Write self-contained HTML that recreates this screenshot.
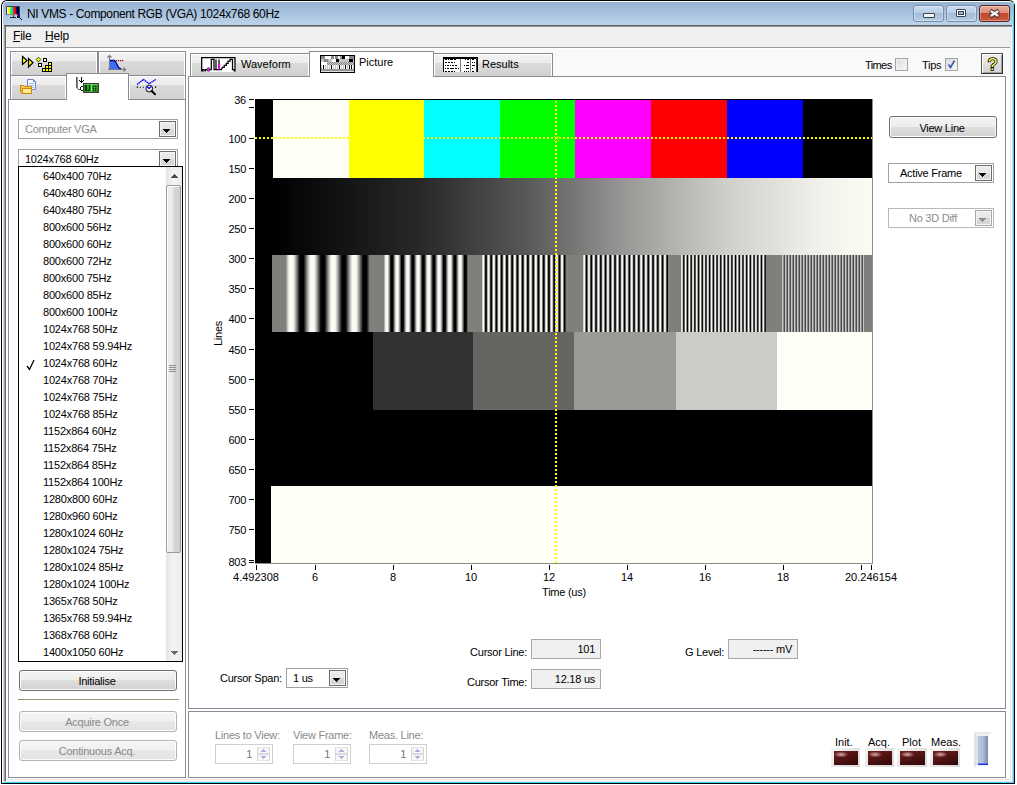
<!DOCTYPE html><html><head><meta charset="utf-8"><style>
html,body{margin:0;padding:0;width:1017px;height:785px;overflow:hidden;background:#fff}
body>div,body>svg{position:absolute;box-sizing:content-box}
.t{font-family:"Liberation Sans",sans-serif;color:#000;white-space:nowrap;letter-spacing:-0.25px}
u{text-decoration:underline;text-underline-offset:1px}
</style></head><body>
<div style="left:1px;top:0;width:1014px;height:784px;background:#000;border-radius:6px 6px 0 0"></div>
<div style="left:2px;top:1px;width:1012px;height:782px;background:#fff;border-radius:5px 5px 0 0"></div>
<div style="left:3px;top:2px;width:1010px;height:780px;background:linear-gradient(#95b1cf 0px,#bcd4ec 23px,#c4d9ee 24px);border-radius:4px 4px 0 0"></div>
<div style="left:1013px;top:2px;width:1px;height:781px;background:#44d4f2"></div>
<div style="left:3px;top:782px;width:1011px;height:1px;background:#44d4f2"></div>
<div style="left:1012px;top:24px;width:1px;height:758px;background:#c8d2f0"></div>
<div style="left:3px;top:781px;width:1010px;height:1px;background:#dfe3f6"></div>
<div style="left:4px;top:25px;width:1008px;height:1px;background:#5e5e5e"></div>
<div style="left:4px;top:26px;width:1008px;height:1px;background:#9a9a9a"></div>
<div style="left:4px;top:26px;width:1px;height:755px;background:#a0a0a0"></div>
<div style="left:5px;top:26px;width:1px;height:755px;background:#6a6a6a"></div>
<div style="left:6px;top:27px;width:1006px;height:754px;background:#fff"></div>
<div style="left:186px;top:49px;width:824px;height:27px;background:#f9f9f9"></div>
<div style="left:1011px;top:27px;width:1px;height:754px;background:#fff"></div>
<div style="left:1010px;top:27px;width:1px;height:752px;background:#e5e5e5"></div>
<div style="left:6px;top:780px;width:1006px;height:1px;background:#fff"></div>
<div style="left:6px;top:779px;width:1005px;height:1px;background:#e5e5e5"></div>
<div style="left:6px;top:27px;width:1004px;height:20px;background:#f0f0f0"></div>
<div style="left:6px;top:47px;width:1004px;height:1px;background:#9c9c9c"></div>
<div style="left:6px;top:48px;width:1004px;height:1px;background:#fff"></div>
<svg style="left:6px;top:6px" width="17" height="14" viewBox="6 6 17 14" shape-rendering="crispEdges">
<rect x="6" y="6" width="14" height="9" fill="#454545"/>
<rect x="7" y="7" width="1" height="7" fill="#fff"/><rect x="8" y="7" width="2" height="7" fill="#ff0"/>
<rect x="10" y="7" width="1" height="7" fill="#0ff"/><rect x="11" y="7" width="2" height="7" fill="#0f0"/>
<rect x="13" y="7" width="1" height="7" fill="#f0f"/><rect x="14" y="7" width="2" height="7" fill="#f00"/>
<rect x="16" y="7" width="1" height="7" fill="#00f"/><rect x="17" y="7" width="2" height="7" fill="#000"/>
<rect x="7" y="14" width="12" height="1" fill="#8a8a8a"/>
<rect x="13" y="15" width="1" height="2" fill="#333"/><rect x="10" y="17" width="6" height="1" fill="#222"/>
<rect x="17" y="14" width="3" height="4" fill="#1a1a1a"/><rect x="17" y="14" width="1" height="2" fill="#f00"/><rect x="18" y="14" width="1" height="3" fill="#00f"/>
<rect x="20" y="18" width="1" height="1" fill="#111"/><rect x="21" y="19" width="1" height="1" fill="#111"/>
</svg>
<div class="t" style="left:27px;top:8px;font-size:12px;line-height:12px;letter-spacing:-0.36px">NI VMS - Component RGB (VGA) 1024x768 60Hz</div>
<div style="left:913px;top:5px;width:29px;height:15px;border:1px solid #7a8ea8;border-radius:3px;background:linear-gradient(#c9dcf0 0%,#b8cfe8 45%,#a3bcd9 50%,#b5cde6 100%);box-shadow:inset 0 0 0 1px rgba(255,255,255,0.35)"></div>
<div style="left:946px;top:5px;width:29px;height:15px;border:1px solid #7a8ea8;border-radius:3px;background:linear-gradient(#c9dcf0 0%,#b8cfe8 45%,#a3bcd9 50%,#b5cde6 100%);box-shadow:inset 0 0 0 1px rgba(255,255,255,0.35)"></div>
<div style="left:979px;top:5px;width:29px;height:15px;border:1px solid #5a1f1f;border-radius:3px;background:linear-gradient(#e8a898 0%,#dd8e7c 45%,#c4482c 50%,#c85b40 100%);box-shadow:inset 0 0 0 1px rgba(255,255,255,0.35)"></div>
<div style="left:923px;top:13px;width:10px;height:3px;background:#f4f4f4;border:1px solid #39424e;border-radius:1px"></div>
<div style="left:956px;top:9px;width:8px;height:6px;border:1px solid #39424e;background:#fff;border-radius:1px"></div>
<div style="left:958px;top:11px;width:4px;height:2px;border:1px solid #39424e;background:#9fb6d0"></div>
<svg style="left:986px;top:7px" width="16" height="12" viewBox="986 7 16 12"><path d="M990.3 10.6 L998.7 16.4 M998.7 10.6 L990.3 16.4" stroke="#3a2a2a" stroke-width="4.2" stroke-linecap="butt"/><path d="M990.8 10.9 L998.2 16.1 M998.2 10.9 L990.8 16.1" stroke="#f4f4f4" stroke-width="2.4" stroke-linecap="butt"/></svg>
<div class="t" style="left:13px;top:30px;font-size:12px;line-height:12px;letter-spacing:-0.2px"><u>F</u>ile</div>
<div class="t" style="left:45px;top:30px;font-size:12px;line-height:12px;letter-spacing:-0.2px"><u>H</u>elp</div>
<div style="left:8px;top:99px;width:176px;height:677px;border:1px solid #898c95;background:#fff"></div>
<div style="left:10px;top:51px;width:86px;height:23px;border:1px solid #898c95;border-bottom:none;background:linear-gradient(#f3f3f3 0%,#ececec 40%,#dcdcdc 40%,#d0d0d0 100%);box-shadow:inset 1px 1px 0 #fff,inset -1px 0 0 #fff"></div>
<div style="left:98px;top:51px;width:86px;height:23px;border:1px solid #898c95;border-bottom:none;background:linear-gradient(#f3f3f3 0%,#ececec 40%,#dcdcdc 40%,#d0d0d0 100%);box-shadow:inset 1px 1px 0 #fff,inset -1px 0 0 #fff"></div>
<div style="left:10px;top:75px;width:55px;height:23px;border:1px solid #898c95;border-bottom:none;background:linear-gradient(#f3f3f3 0%,#ececec 40%,#dcdcdc 40%,#d0d0d0 100%);box-shadow:inset 1px 1px 0 #fff,inset -1px 0 0 #fff"></div>
<div style="left:128px;top:75px;width:56px;height:23px;border:1px solid #898c95;border-bottom:none;background:linear-gradient(#f3f3f3 0%,#ececec 40%,#dcdcdc 40%,#d0d0d0 100%);box-shadow:inset 1px 1px 0 #fff,inset -1px 0 0 #fff"></div>
<div style="left:66px;top:73px;width:61px;height:26px;border:1px solid #898c95;border-bottom:none;background:#fff"></div>
<div style="left:188px;top:76px;width:816px;height:631px;border:1px solid #898c95;background:#fff"></div>
<div style="left:188px;top:711px;width:816px;height:65px;border:1px solid #898c95;background:#fff"></div>
<div style="left:190px;top:53px;width:118px;height:22px;border:1px solid #898c95;border-bottom:none;background:linear-gradient(#f3f3f3 0%,#ececec 40%,#dcdcdc 40%,#d0d0d0 100%);box-shadow:inset 1px 1px 0 #fff,inset -1px 0 0 #fff"></div>
<div style="left:433px;top:53px;width:118px;height:22px;border:1px solid #898c95;border-bottom:none;background:linear-gradient(#f3f3f3 0%,#ececec 40%,#dcdcdc 40%,#d0d0d0 100%);box-shadow:inset 1px 1px 0 #fff,inset -1px 0 0 #fff"></div>
<div style="left:309px;top:51px;width:123px;height:25px;border:1px solid #898c95;border-bottom:none;background:#fff"></div>
<div class="t" style="left:241px;top:59px;font-size:11px;line-height:11px;letter-spacing:0">Waveform</div>
<div class="t" style="left:359px;top:57px;font-size:11px;line-height:11px;letter-spacing:0">Picture</div>
<div class="t" style="left:482px;top:59px;font-size:11px;line-height:11px;letter-spacing:0">Results</div>
<div style="left:255px;top:99px;width:617px;height:464px;background:#000"></div>
<div style="left:273px;top:100px;width:76px;height:78px;background:#fdfef5"></div>
<div style="left:349px;top:100px;width:75px;height:78px;background:#ffff00"></div>
<div style="left:424px;top:100px;width:76px;height:78px;background:#00ffff"></div>
<div style="left:500px;top:100px;width:75px;height:78px;background:#00ff00"></div>
<div style="left:575px;top:100px;width:76px;height:78px;background:#ff00ff"></div>
<div style="left:651px;top:100px;width:76px;height:78px;background:#ff0000"></div>
<div style="left:727px;top:100px;width:76px;height:78px;background:#0000ff"></div>
<div style="left:273px;top:178px;width:599px;height:77px;background:linear-gradient(90deg,rgb(0,0,0) 0%,rgb(41,41,41) 25%,rgb(87,87,86) 42%,rgb(117,118,115) 50%,rgb(153,154,151) 59%,rgb(207,208,203) 76%,rgb(242,243,236) 92%,rgb(251,253,243) 100%)"></div>
<div style="left:272px;top:255px;width:600px;height:77px;background:#7f807b"></div>
<div style="left:286px;top:255px;width:84px;height:77px;background:repeating-linear-gradient(90deg,rgb(139,140,139) 0.000px,rgb(173,174,173) 0.875px,rgb(204,205,198) 1.750px,rgb(230,231,224) 2.625px,rgb(250,251,244) 3.500px,rgb(250,251,244) 4.375px,rgb(250,251,244) 5.250px,rgb(250,251,244) 6.125px,rgb(250,251,244) 7.000px,rgb(230,231,224) 7.875px,rgb(204,205,198) 8.750px,rgb(173,174,173) 9.625px,rgb(139,140,139) 10.500px,rgb(103,104,103) 11.375px,rgb(67,68,67) 12.250px,rgb(33,34,33) 13.125px,rgb(1,2,1) 14.000px,rgb(0,1,0) 14.875px,rgb(0,1,0) 15.750px,rgb(0,1,0) 16.625px,rgb(1,2,1) 17.500px,rgb(33,34,33) 18.375px,rgb(67,68,67) 19.250px,rgb(103,104,103) 20.125px,rgb(139,140,139) 21.000px)"></div>
<div style="left:384px;top:255px;width:84px;height:77px;background:repeating-linear-gradient(90deg,rgb(139,140,139) 0.000px,rgb(173,174,173) 0.438px,rgb(204,205,198) 0.875px,rgb(230,231,224) 1.312px,rgb(250,251,244) 1.750px,rgb(250,251,244) 2.188px,rgb(250,251,244) 2.625px,rgb(250,251,244) 3.062px,rgb(250,251,244) 3.500px,rgb(230,231,224) 3.938px,rgb(204,205,198) 4.375px,rgb(173,174,173) 4.812px,rgb(139,140,139) 5.250px,rgb(103,104,103) 5.688px,rgb(67,68,67) 6.125px,rgb(33,34,33) 6.562px,rgb(1,2,1) 7.000px,rgb(0,1,0) 7.438px,rgb(0,1,0) 7.875px,rgb(0,1,0) 8.312px,rgb(1,2,1) 8.750px,rgb(33,34,33) 9.188px,rgb(67,68,67) 9.625px,rgb(103,104,103) 10.062px,rgb(139,140,139) 10.500px)"></div>
<div style="left:482px;top:255px;width:84px;height:77px;background:repeating-linear-gradient(90deg,rgb(139,140,139) 0.000px,rgb(172,173,172) 0.219px,rgb(201,202,195) 0.438px,rgb(226,227,220) 0.656px,rgb(245,246,239) 0.875px,rgb(250,251,244) 1.094px,rgb(250,251,244) 1.312px,rgb(250,251,244) 1.531px,rgb(245,246,239) 1.750px,rgb(226,227,220) 1.969px,rgb(201,202,195) 2.188px,rgb(172,173,172) 2.406px,rgb(139,140,139) 2.625px,rgb(104,105,104) 2.844px,rgb(70,71,70) 3.062px,rgb(39,40,39) 3.281px,rgb(10,11,10) 3.500px,rgb(0,1,0) 3.719px,rgb(0,1,0) 3.938px,rgb(0,1,0) 4.156px,rgb(10,11,10) 4.375px,rgb(39,40,39) 4.594px,rgb(70,71,70) 4.812px,rgb(104,105,104) 5.031px,rgb(139,140,139) 5.250px)"></div>
<div style="left:583px;top:255px;width:85px;height:77px;background:repeating-linear-gradient(90deg,rgb(139,140,139) 0.000px,rgb(170,171,170) 0.198px,rgb(199,200,199) 0.396px,rgb(222,223,216) 0.594px,rgb(240,241,234) 0.792px,rgb(250,251,244) 0.990px,rgb(250,251,244) 1.188px,rgb(250,251,244) 1.385px,rgb(240,241,234) 1.583px,rgb(222,223,216) 1.781px,rgb(199,200,199) 1.979px,rgb(170,171,170) 2.177px,rgb(139,140,139) 2.375px,rgb(106,107,106) 2.573px,rgb(74,75,74) 2.771px,rgb(44,45,44) 2.969px,rgb(18,19,18) 3.167px,rgb(0,1,0) 3.365px,rgb(0,1,0) 3.562px,rgb(0,1,0) 3.760px,rgb(18,19,18) 3.958px,rgb(44,45,44) 4.156px,rgb(74,75,74) 4.354px,rgb(106,107,106) 4.552px,rgb(139,140,139) 4.750px)"></div>
<div style="left:681px;top:255px;width:85px;height:77px;background:repeating-linear-gradient(90deg,rgb(139,140,139) 0.000px,rgb(169,170,169) 0.154px,rgb(196,197,196) 0.308px,rgb(219,220,213) 0.463px,rgb(236,237,230) 0.617px,rgb(246,247,240) 0.771px,rgb(250,251,244) 0.925px,rgb(246,247,240) 1.079px,rgb(236,237,230) 1.233px,rgb(219,220,213) 1.388px,rgb(196,197,196) 1.542px,rgb(169,170,169) 1.696px,rgb(139,140,139) 1.850px,rgb(108,109,108) 2.004px,rgb(77,78,77) 2.158px,rgb(49,50,49) 2.312px,rgb(25,26,25) 2.467px,rgb(8,9,8) 2.621px,rgb(0,1,0) 2.775px,rgb(8,9,8) 2.929px,rgb(25,26,25) 3.083px,rgb(49,50,49) 3.238px,rgb(77,78,77) 3.392px,rgb(108,109,108) 3.546px,rgb(139,140,139) 3.700px)"></div>
<div style="left:782px;top:255px;width:82px;height:77px;background:repeating-linear-gradient(90deg,rgb(139,140,139) 0.000px,rgb(157,158,157) 0.125px,rgb(173,174,173) 0.250px,rgb(187,188,187) 0.375px,rgb(198,199,198) 0.500px,rgb(205,206,199) 0.625px,rgb(207,208,201) 0.750px,rgb(205,206,199) 0.875px,rgb(198,199,198) 1.000px,rgb(187,188,187) 1.125px,rgb(173,174,173) 1.250px,rgb(157,158,157) 1.375px,rgb(139,140,139) 1.500px,rgb(120,121,120) 1.625px,rgb(102,103,102) 1.750px,rgb(87,88,87) 1.875px,rgb(74,75,74) 2.000px,rgb(66,67,66) 2.125px,rgb(64,65,64) 2.250px,rgb(66,67,66) 2.375px,rgb(74,75,74) 2.500px,rgb(87,88,87) 2.625px,rgb(102,103,102) 2.750px,rgb(120,121,120) 2.875px,rgb(139,140,139) 3.000px)"></div>
<div style="left:373px;top:332px;width:100px;height:78px;background:#323232"></div>
<div style="left:473px;top:332px;width:101px;height:78px;background:#656661"></div>
<div style="left:574px;top:332px;width:102px;height:78px;background:#9a9a96"></div>
<div style="left:676px;top:332px;width:101px;height:78px;background:#cbccc7"></div>
<div style="left:777px;top:332px;width:95px;height:78px;background:#fdfef5"></div>
<div style="left:271px;top:486px;width:601px;height:77px;background:#fdfef5"></div>
<div style="left:872px;top:99px;width:1px;height:465px;background:#8c8c8c"></div>
<div style="left:255px;top:563px;width:618px;height:1px;background:#8c8c8c"></div>
<div style="left:255px;top:137px;width:617px;height:2px;background:repeating-linear-gradient(90deg,#ffff00 0,#ffff00 2px,transparent 2px,transparent 4px)"></div>
<div style="left:555px;top:99px;width:2px;height:464px;background:repeating-linear-gradient(180deg,transparent 0,transparent 2px,#ffff00 2px,#ffff00 4px)"></div>
<svg style="left:553px;top:135px" width="7" height="7" viewBox="0 0 7 7" shape-rendering="crispEdges"><path d="M1 1h1v1H1zM2 2h1v1H2zM3 3h1v1H3zM4 4h1v1H4zM5 5h1v1H5zM5 1h1v1H5zM4 2h1v1H4zM2 4h1v1H2zM1 5h1v1H1z" fill="#ffff00"/></svg>
<div style="left:249px;top:99px;width:5px;height:1px;background:#000"></div>
<div style="left:249px;top:107px;width:5px;height:1px;background:#000"></div>
<div style="left:249px;top:138px;width:5px;height:1px;background:#000"></div>
<div style="left:249px;top:168px;width:5px;height:1px;background:#000"></div>
<div style="left:249px;top:198px;width:5px;height:1px;background:#000"></div>
<div style="left:249px;top:228px;width:5px;height:1px;background:#000"></div>
<div style="left:249px;top:258px;width:5px;height:1px;background:#000"></div>
<div style="left:249px;top:288px;width:5px;height:1px;background:#000"></div>
<div style="left:249px;top:318px;width:5px;height:1px;background:#000"></div>
<div style="left:249px;top:349px;width:5px;height:1px;background:#000"></div>
<div style="left:249px;top:379px;width:5px;height:1px;background:#000"></div>
<div style="left:249px;top:409px;width:5px;height:1px;background:#000"></div>
<div style="left:249px;top:439px;width:5px;height:1px;background:#000"></div>
<div style="left:249px;top:469px;width:5px;height:1px;background:#000"></div>
<div style="left:249px;top:499px;width:5px;height:1px;background:#000"></div>
<div style="left:249px;top:529px;width:5px;height:1px;background:#000"></div>
<div style="left:249px;top:560px;width:5px;height:1px;background:#000"></div>
<div style="left:249px;top:562px;width:5px;height:1px;background:#000"></div>
<div class="t" style="right:771px;top:95px;font-size:11px;line-height:11px;text-align:right;">36</div>
<div class="t" style="right:771px;top:134px;font-size:11px;line-height:11px;text-align:right;">100</div>
<div class="t" style="right:771px;top:164px;font-size:11px;line-height:11px;text-align:right;">150</div>
<div class="t" style="right:771px;top:194px;font-size:11px;line-height:11px;text-align:right;">200</div>
<div class="t" style="right:771px;top:224px;font-size:11px;line-height:11px;text-align:right;">250</div>
<div class="t" style="right:771px;top:254px;font-size:11px;line-height:11px;text-align:right;">300</div>
<div class="t" style="right:771px;top:284px;font-size:11px;line-height:11px;text-align:right;">350</div>
<div class="t" style="right:771px;top:314px;font-size:11px;line-height:11px;text-align:right;">400</div>
<div class="t" style="right:771px;top:345px;font-size:11px;line-height:11px;text-align:right;">450</div>
<div class="t" style="right:771px;top:375px;font-size:11px;line-height:11px;text-align:right;">500</div>
<div class="t" style="right:771px;top:405px;font-size:11px;line-height:11px;text-align:right;">550</div>
<div class="t" style="right:771px;top:435px;font-size:11px;line-height:11px;text-align:right;">600</div>
<div class="t" style="right:771px;top:465px;font-size:11px;line-height:11px;text-align:right;">650</div>
<div class="t" style="right:771px;top:495px;font-size:11px;line-height:11px;text-align:right;">700</div>
<div class="t" style="right:771px;top:525px;font-size:11px;line-height:11px;text-align:right;">750</div>
<div class="t" style="right:771px;top:557px;font-size:11px;line-height:11px;text-align:right;">803</div>
<div style="left:256px;top:565px;width:1px;height:5px;background:#000"></div>
<div style="left:315px;top:565px;width:1px;height:5px;background:#000"></div>
<div style="left:393px;top:565px;width:1px;height:5px;background:#000"></div>
<div style="left:471px;top:565px;width:1px;height:5px;background:#000"></div>
<div style="left:549px;top:565px;width:1px;height:5px;background:#000"></div>
<div style="left:627px;top:565px;width:1px;height:5px;background:#000"></div>
<div style="left:705px;top:565px;width:1px;height:5px;background:#000"></div>
<div style="left:783px;top:565px;width:1px;height:5px;background:#000"></div>
<div style="left:861px;top:565px;width:1px;height:5px;background:#000"></div>
<div style="left:871px;top:565px;width:1px;height:5px;background:#000"></div>
<div class="t" style="left:216px;width:80px;top:572px;font-size:11px;line-height:11px;text-align:center;letter-spacing:0">4.492308</div>
<div class="t" style="left:275px;width:80px;top:572px;font-size:11px;line-height:11px;text-align:center;letter-spacing:0">6</div>
<div class="t" style="left:353px;width:80px;top:572px;font-size:11px;line-height:11px;text-align:center;letter-spacing:0">8</div>
<div class="t" style="left:431px;width:80px;top:572px;font-size:11px;line-height:11px;text-align:center;letter-spacing:0">10</div>
<div class="t" style="left:509px;width:80px;top:572px;font-size:11px;line-height:11px;text-align:center;letter-spacing:0">12</div>
<div class="t" style="left:587px;width:80px;top:572px;font-size:11px;line-height:11px;text-align:center;letter-spacing:0">14</div>
<div class="t" style="left:665px;width:80px;top:572px;font-size:11px;line-height:11px;text-align:center;letter-spacing:0">16</div>
<div class="t" style="left:743px;width:80px;top:572px;font-size:11px;line-height:11px;text-align:center;letter-spacing:0">18</div>
<div class="t" style="left:831px;width:80px;top:572px;font-size:11px;line-height:11px;text-align:center;letter-spacing:0">20.246154</div>
<div class="t" style="left:524px;width:80px;top:587px;font-size:11px;line-height:11px;text-align:center;">Time (us)</div>
<div class="t" style="left:198px;top:328px;width:40px;height:11px;font-size:11px;line-height:11px;text-align:center;transform:rotate(-90deg)">Lines</div>
<div style="left:18px;top:119px;width:158px;height:18px;border:1px solid #a0a0a8;background:#fff"></div>
<div style="left:159px;top:121px;width:15px;height:14px;border:1px solid #6d6d6d;background:linear-gradient(#fbfbfb 0,#fbfbfb 1px,#ececec 1px,#e6e6e6 50%,#d8d8d8 50%,#d4d4d4 100%);box-shadow:inset 0 0 0 1px #f4f4f4"></div>
<svg style="left:163px;top:129px" width="8" height="4" viewBox="0 0 8 4" shape-rendering="crispEdges"><path d="M0 0h7v1h-1v1h-1v1h-1v1h-1v-1h-1v-1h-1v-1h-1z" fill="#000"/></svg>
<div class="t" style="left:25px;top:124px;font-size:11px;line-height:11px;color:#8d8d8d">Computer VGA</div>
<div style="left:18px;top:149px;width:158px;height:18px;border:1px solid #a0a0a8;background:#fff"></div>
<div style="left:159px;top:151px;width:15px;height:14px;border:1px solid #6d6d6d;background:linear-gradient(#fbfbfb 0,#fbfbfb 1px,#ececec 1px,#e6e6e6 50%,#d8d8d8 50%,#d4d4d4 100%);box-shadow:inset 0 0 0 1px #f4f4f4"></div>
<svg style="left:163px;top:159px" width="8" height="4" viewBox="0 0 8 4" shape-rendering="crispEdges"><path d="M0 0h7v1h-1v1h-1v1h-1v1h-1v-1h-1v-1h-1v-1h-1z" fill="#000"/></svg>
<div class="t" style="left:25px;top:154px;font-size:11px;line-height:11px;">1024x768 60Hz</div>
<div style="left:18px;top:166px;width:163px;height:494px;border:1px solid #000;background:#fff"></div>
<div class="t" style="left:43px;top:171px;font-size:11px;line-height:11px;letter-spacing:-0.2px">640x400 70Hz</div>
<div class="t" style="left:43px;top:188px;font-size:11px;line-height:11px;letter-spacing:-0.2px">640x480 60Hz</div>
<div class="t" style="left:43px;top:205px;font-size:11px;line-height:11px;letter-spacing:-0.2px">640x480 75Hz</div>
<div class="t" style="left:43px;top:222px;font-size:11px;line-height:11px;letter-spacing:-0.2px">800x600 56Hz</div>
<div class="t" style="left:43px;top:239px;font-size:11px;line-height:11px;letter-spacing:-0.2px">800x600 60Hz</div>
<div class="t" style="left:43px;top:256px;font-size:11px;line-height:11px;letter-spacing:-0.2px">800x600 72Hz</div>
<div class="t" style="left:43px;top:273px;font-size:11px;line-height:11px;letter-spacing:-0.2px">800x600 75Hz</div>
<div class="t" style="left:43px;top:290px;font-size:11px;line-height:11px;letter-spacing:-0.2px">800x600 85Hz</div>
<div class="t" style="left:43px;top:307px;font-size:11px;line-height:11px;letter-spacing:-0.2px">800x600 100Hz</div>
<div class="t" style="left:43px;top:324px;font-size:11px;line-height:11px;letter-spacing:-0.2px">1024x768 50Hz</div>
<div class="t" style="left:43px;top:341px;font-size:11px;line-height:11px;letter-spacing:-0.2px">1024x768 59.94Hz</div>
<div class="t" style="left:43px;top:358px;font-size:11px;line-height:11px;letter-spacing:-0.2px">1024x768 60Hz</div>
<div class="t" style="left:43px;top:375px;font-size:11px;line-height:11px;letter-spacing:-0.2px">1024x768 70Hz</div>
<div class="t" style="left:43px;top:392px;font-size:11px;line-height:11px;letter-spacing:-0.2px">1024x768 75Hz</div>
<div class="t" style="left:43px;top:409px;font-size:11px;line-height:11px;letter-spacing:-0.2px">1024x768 85Hz</div>
<div class="t" style="left:43px;top:426px;font-size:11px;line-height:11px;letter-spacing:-0.2px">1152x864 60Hz</div>
<div class="t" style="left:43px;top:443px;font-size:11px;line-height:11px;letter-spacing:-0.2px">1152x864 75Hz</div>
<div class="t" style="left:43px;top:460px;font-size:11px;line-height:11px;letter-spacing:-0.2px">1152x864 85Hz</div>
<div class="t" style="left:43px;top:477px;font-size:11px;line-height:11px;letter-spacing:-0.2px">1152x864 100Hz</div>
<div class="t" style="left:43px;top:494px;font-size:11px;line-height:11px;letter-spacing:-0.2px">1280x800 60Hz</div>
<div class="t" style="left:43px;top:511px;font-size:11px;line-height:11px;letter-spacing:-0.2px">1280x960 60Hz</div>
<div class="t" style="left:43px;top:528px;font-size:11px;line-height:11px;letter-spacing:-0.2px">1280x1024 60Hz</div>
<div class="t" style="left:43px;top:545px;font-size:11px;line-height:11px;letter-spacing:-0.2px">1280x1024 75Hz</div>
<div class="t" style="left:43px;top:562px;font-size:11px;line-height:11px;letter-spacing:-0.2px">1280x1024 85Hz</div>
<div class="t" style="left:43px;top:579px;font-size:11px;line-height:11px;letter-spacing:-0.2px">1280x1024 100Hz</div>
<div class="t" style="left:43px;top:596px;font-size:11px;line-height:11px;letter-spacing:-0.2px">1365x768 50Hz</div>
<div class="t" style="left:43px;top:613px;font-size:11px;line-height:11px;letter-spacing:-0.2px">1365x768 59.94Hz</div>
<div class="t" style="left:43px;top:630px;font-size:11px;line-height:11px;letter-spacing:-0.2px">1368x768 60Hz</div>
<div class="t" style="left:43px;top:647px;font-size:11px;line-height:11px;letter-spacing:-0.2px">1400x1050 60Hz</div>
<svg style="left:26px;top:359px" width="9" height="12" viewBox="0 0 9 12"><path d="M1 7 L3.5 10.5 L8 1" stroke="#000" stroke-width="1.3" fill="none"/></svg>
<div style="left:166px;top:167px;width:16px;height:494px;background:linear-gradient(90deg,#e4e4e4,#f2f2f2 40%,#f2f2f2 60%,#eaeaea)"></div>
<svg style="left:171px;top:174px" width="8" height="5" viewBox="0 0 8 5" shape-rendering="crispEdges"><path d="M3 0h1v1h1v1h1v1h1v1H0V3h1V2h1V1h1z" fill="#4a4a4a"/></svg>
<svg style="left:171px;top:651px" width="8" height="5" viewBox="0 0 8 5" shape-rendering="crispEdges"><path d="M0 0h7v1h-1v1h-1v1h-1v1h-1V3H2V2H1V1H0z" fill="#6a6a6a"/></svg>
<div style="left:166px;top:185px;width:13px;height:366px;border:1px solid #9a9a9a;border-radius:2px;background:linear-gradient(90deg,#f0f0f0 0%,#e8e8e8 45%,#d6d6d6 55%,#cfcfcf 100%);box-shadow:inset 1px 1px 0 #fff"></div>
<div style="left:169px;top:365px;width:7px;height:1px;background:#8e8e8e"></div>
<div style="left:169px;top:367px;width:7px;height:1px;background:#8e8e8e"></div>
<div style="left:169px;top:369px;width:7px;height:1px;background:#8e8e8e"></div>
<div style="left:169px;top:371px;width:7px;height:1px;background:#8e8e8e"></div>
<div style="left:19px;top:670px;width:156px;height:19px;border:1px solid #707070;border-radius:3px;background:linear-gradient(#f4f4f4 0%,#ececec 50%,#dedede 50%,#d2d2d2 100%);box-shadow:inset 0 0 0 1px #fcfcfc"></div>
<div class="t" style="left:17px;width:160px;top:676px;font-size:11px;line-height:11px;text-align:center;color:#000">Initialise</div>
<div style="left:18px;top:699px;width:161px;height:1px;background:#9d9478"></div>
<div style="left:18px;top:700px;width:161px;height:1px;background:#fff"></div>
<div style="left:19px;top:711px;width:156px;height:19px;border:1px solid #b4b4b4;border-radius:3px;background:linear-gradient(#f6f6f6 0%,#f0f0f0 50%,#e8e8e8 50%,#e2e2e2 100%);box-shadow:inset 0 0 0 1px #fcfcfc"></div>
<div class="t" style="left:17px;width:160px;top:717px;font-size:11px;line-height:11px;text-align:center;color:#8a8a8a">Acquire Once</div>
<div style="left:19px;top:740px;width:156px;height:19px;border:1px solid #b4b4b4;border-radius:3px;background:linear-gradient(#f6f6f6 0%,#f0f0f0 50%,#e8e8e8 50%,#e2e2e2 100%);box-shadow:inset 0 0 0 1px #fcfcfc"></div>
<div class="t" style="left:17px;width:160px;top:746px;font-size:11px;line-height:11px;text-align:center;color:#8a8a8a">Continuous Acq.</div>
<div style="left:889px;top:116px;width:106px;height:20px;border:1px solid #707070;border-radius:3px;background:linear-gradient(#f4f4f4 0%,#ececec 50%,#dedede 50%,#d2d2d2 100%);box-shadow:inset 0 0 0 1px #fcfcfc"></div>
<div class="t" style="left:862px;width:160px;top:123px;font-size:11px;line-height:11px;text-align:center;color:#000">View Line</div>
<div style="left:888px;top:163px;width:104px;height:18px;border:1px solid #a0a0a8;background:#fff"></div>
<div style="left:975px;top:165px;width:15px;height:14px;border:1px solid #6d6d6d;background:linear-gradient(#fbfbfb 0,#fbfbfb 1px,#ececec 1px,#e6e6e6 50%,#d8d8d8 50%,#d4d4d4 100%);box-shadow:inset 0 0 0 1px #f4f4f4"></div>
<svg style="left:979px;top:173px" width="8" height="4" viewBox="0 0 8 4" shape-rendering="crispEdges"><path d="M0 0h7v1h-1v1h-1v1h-1v1h-1v-1h-1v-1h-1v-1h-1z" fill="#000"/></svg>
<div class="t" style="left:900px;top:168px;font-size:11px;line-height:11px;">Active Frame</div>
<div style="left:888px;top:208px;width:104px;height:18px;border:1px solid #b8b8c0;background:#fff"></div>
<div style="left:975px;top:210px;width:15px;height:14px;border:1px solid #a8a8a8;background:linear-gradient(#fbfbfb 0,#fbfbfb 1px,#ececec 1px,#e6e6e6 50%,#d8d8d8 50%,#d4d4d4 100%);box-shadow:inset 0 0 0 1px #f4f4f4"></div>
<svg style="left:979px;top:218px" width="8" height="4" viewBox="0 0 8 4" shape-rendering="crispEdges"><path d="M0 0h7v1h-1v1h-1v1h-1v1h-1v-1h-1v-1h-1v-1h-1z" fill="#8a8a8a"/></svg>
<div class="t" style="left:909px;top:213px;font-size:11px;line-height:11px;color:#8d8d8d">No 3D Diff</div>
<div class="t" style="left:865px;top:60px;font-size:11px;line-height:11px;letter-spacing:-0.6px">Times</div>
<div style="left:895px;top:58px;width:11px;height:11px;border:1px solid #a4a4a4;background:linear-gradient(135deg,#dcdcdc,#f8f8f8);box-shadow:inset 0 0 0 1px #f2f2f2"></div>
<div class="t" style="left:922px;top:60px;font-size:11px;line-height:11px;">Tips</div>
<div style="left:945px;top:58px;width:11px;height:11px;border:1px solid #a4a4a4;background:linear-gradient(135deg,#dcdcdc,#f8f8f8)"></div>
<svg style="left:946px;top:59px" width="11" height="11" viewBox="0 0 11 11"><path d="M2.5 5.5 L4.5 8.5 L8.5 1.5" stroke="#3b55b5" stroke-width="1.6" fill="none"/></svg>
<div style="left:981px;top:53px;width:20px;height:19px;border:1px solid #555;border-bottom-color:#333;border-right-color:#333;background:linear-gradient(#f0f0f0,#d0d0d0);box-shadow:inset 1px 1px 0 #fff,inset -1px -1px 0 #a0a0a0"></div>
<svg style="left:982px;top:54px" width="20" height="19" viewBox="0 0 20 19"><text x="10.5" y="15.5" text-anchor="middle" font-family="Liberation Sans" font-size="17" fill="#ffff50" stroke="#000" stroke-width="1.6" paint-order="stroke">?</text></svg>
<div class="t" style="left:220px;top:673px;font-size:11px;line-height:11px;">Cursor Span:</div>
<div style="left:286px;top:668px;width:60px;height:18px;border:1px solid #a0a0a8;background:#fff"></div>
<div style="left:329px;top:670px;width:15px;height:14px;border:1px solid #6d6d6d;background:linear-gradient(#fbfbfb 0,#fbfbfb 1px,#ececec 1px,#e6e6e6 50%,#d8d8d8 50%,#d4d4d4 100%);box-shadow:inset 0 0 0 1px #f4f4f4"></div>
<svg style="left:333px;top:678px" width="8" height="4" viewBox="0 0 8 4" shape-rendering="crispEdges"><path d="M0 0h7v1h-1v1h-1v1h-1v1h-1v-1h-1v-1h-1v-1h-1z" fill="#000"/></svg>
<div class="t" style="left:293px;top:673px;font-size:11px;line-height:11px;">1 us</div>
<div class="t" style="right:490px;top:647px;font-size:11px;line-height:11px;text-align:right;">Cursor Line:</div>
<div style="left:531px;top:639px;width:70px;height:20px;background:#f0f0f0;border:1px solid #a8a8a8;box-sizing:border-box"></div>
<div class="t" style="right:422px;top:644px;font-size:11px;line-height:11px;text-align:right;">101</div>
<div class="t" style="right:490px;top:677px;font-size:11px;line-height:11px;text-align:right;">Cursor Time:</div>
<div style="left:531px;top:669px;width:70px;height:20px;background:#f0f0f0;border:1px solid #a8a8a8;box-sizing:border-box"></div>
<div class="t" style="right:422px;top:674px;font-size:11px;line-height:11px;text-align:right;">12.18 us</div>
<div class="t" style="right:293px;top:647px;font-size:11px;line-height:11px;text-align:right;">G Level:</div>
<div style="left:728px;top:639px;width:70px;height:20px;background:#f0f0f0;border:1px solid #a8a8a8;box-sizing:border-box"></div>
<div class="t" style="right:225px;top:644px;font-size:11px;line-height:11px;text-align:right;">------ mV</div>
<div class="t" style="left:215px;top:730px;font-size:11px;line-height:11px;color:#8a8a8a">Lines to View:</div>
<div style="left:215px;top:744px;width:56px;height:18px;border:1px solid #cfcfcf;background:#fff"></div>
<div class="t" style="right:765px;top:749px;font-size:11px;line-height:11px;text-align:right;color:#777">1</div>
<div style="left:257px;top:747px;width:11px;height:12px;border:1px solid #d6d6d6;border-top-color:#e4e4e4;border-bottom-color:#e4e4e4;background:#f6f6f6"></div>
<div style="left:258px;top:753px;width:11px;height:2px;background:#dcdcdc"></div>
<svg style="left:260px;top:749px" width="8" height="11" viewBox="0 0 8 11" shape-rendering="crispEdges"><path d="M3 0h1v1h1v1h1v1H1V2h1V1h1z" fill="#a4b0e0"/><path d="M1 7h5v1H5v1H4v1H3V9H2V8H1z" fill="#a4b0e0"/></svg>
<div class="t" style="left:293px;top:730px;font-size:11px;line-height:11px;color:#8a8a8a">View Frame:</div>
<div style="left:293px;top:744px;width:56px;height:18px;border:1px solid #cfcfcf;background:#fff"></div>
<div class="t" style="right:687px;top:749px;font-size:11px;line-height:11px;text-align:right;color:#777">1</div>
<div style="left:335px;top:747px;width:11px;height:12px;border:1px solid #d6d6d6;border-top-color:#e4e4e4;border-bottom-color:#e4e4e4;background:#f6f6f6"></div>
<div style="left:336px;top:753px;width:11px;height:2px;background:#dcdcdc"></div>
<svg style="left:338px;top:749px" width="8" height="11" viewBox="0 0 8 11" shape-rendering="crispEdges"><path d="M3 0h1v1h1v1h1v1H1V2h1V1h1z" fill="#a4b0e0"/><path d="M1 7h5v1H5v1H4v1H3V9H2V8H1z" fill="#a4b0e0"/></svg>
<div class="t" style="left:369px;top:730px;font-size:11px;line-height:11px;color:#8a8a8a">Meas. Line:</div>
<div style="left:369px;top:744px;width:56px;height:18px;border:1px solid #cfcfcf;background:#fff"></div>
<div class="t" style="right:611px;top:749px;font-size:11px;line-height:11px;text-align:right;color:#777">1</div>
<div style="left:411px;top:747px;width:11px;height:12px;border:1px solid #d6d6d6;border-top-color:#e4e4e4;border-bottom-color:#e4e4e4;background:#f6f6f6"></div>
<div style="left:412px;top:753px;width:11px;height:2px;background:#dcdcdc"></div>
<svg style="left:414px;top:749px" width="8" height="11" viewBox="0 0 8 11" shape-rendering="crispEdges"><path d="M3 0h1v1h1v1h1v1H1V2h1V1h1z" fill="#a4b0e0"/><path d="M1 7h5v1H5v1H4v1H3V9H2V8H1z" fill="#a4b0e0"/></svg>
<div style="left:831px;top:748px;width:29px;height:19px;background:linear-gradient(135deg,#f6f6f6 0%,#e4e4e4 50%,#dadada 100%)"></div>
<div style="left:834px;top:751px;width:24px;height:14px;background:radial-gradient(ellipse 7px 3px at 30% 25%,rgba(230,190,190,0.9) 0%,rgba(150,60,60,0) 100%),linear-gradient(160deg,#6e2020 0%,#4a1010 60%,#300606 100%)"></div>
<div class="t" style="left:835px;top:737px;font-size:11px;line-height:11px;letter-spacing:0">Init.</div>
<div style="left:865px;top:748px;width:29px;height:19px;background:linear-gradient(135deg,#f6f6f6 0%,#e4e4e4 50%,#dadada 100%)"></div>
<div style="left:868px;top:751px;width:24px;height:14px;background:radial-gradient(ellipse 7px 3px at 30% 25%,rgba(230,190,190,0.9) 0%,rgba(150,60,60,0) 100%),linear-gradient(160deg,#6e2020 0%,#4a1010 60%,#300606 100%)"></div>
<div class="t" style="left:868px;top:737px;font-size:11px;line-height:11px;letter-spacing:0">Acq.</div>
<div style="left:897px;top:748px;width:30px;height:19px;background:linear-gradient(135deg,#f6f6f6 0%,#e4e4e4 50%,#dadada 100%)"></div>
<div style="left:900px;top:751px;width:25px;height:14px;background:radial-gradient(ellipse 7px 3px at 30% 25%,rgba(230,190,190,0.9) 0%,rgba(150,60,60,0) 100%),linear-gradient(160deg,#6e2020 0%,#4a1010 60%,#300606 100%)"></div>
<div class="t" style="left:902px;top:737px;font-size:11px;line-height:11px;letter-spacing:0">Plot</div>
<div style="left:930px;top:748px;width:30px;height:19px;background:linear-gradient(135deg,#f6f6f6 0%,#e4e4e4 50%,#dadada 100%)"></div>
<div style="left:933px;top:751px;width:25px;height:14px;background:radial-gradient(ellipse 7px 3px at 30% 25%,rgba(230,190,190,0.9) 0%,rgba(150,60,60,0) 100%),linear-gradient(160deg,#6e2020 0%,#4a1010 60%,#300606 100%)"></div>
<div class="t" style="left:931px;top:737px;font-size:11px;line-height:11px;letter-spacing:0">Meas.</div>
<svg style="left:970px;top:728px" width="26" height="44" viewBox="970 728 26 44">
<defs><linearGradient id="thb" x1="0" x2="1" y1="0" y2="0"><stop offset="0" stop-color="#b9c6e2"/><stop offset="0.45" stop-color="#b4c0dc"/><stop offset="1" stop-color="#7a88a8"/></linearGradient>
<linearGradient id="thf" x1="0" x2="0" y1="0" y2="1"><stop offset="0" stop-color="#e6e6e6"/><stop offset="1" stop-color="#f4f4f4"/></linearGradient></defs>
<path d="M974 732 H992 L988 736 H978 Z" fill="url(#thf)"/>
<path d="M974 732 L978 736 V764 L974 768 Z" fill="#e2e2e2"/>
<rect x="978" y="736" width="10" height="28" fill="url(#thb)"/>
<rect x="978" y="763.5" width="10" height="1.6" fill="#1a36e8"/>
</svg>
<svg style="left:20px;top:54px" width="34" height="19" viewBox="20 54 34 19" shape-rendering="crispEdges">
<path d="M22.5 56.5 L27 60.5 L22.5 64.5 Z" fill="#ffff00" stroke="#000" stroke-width="1.2" shape-rendering="auto"/>
<path d="M28.5 58.5 L33 62.7 L28.5 67 Z" fill="#ffff00" stroke="#000" stroke-width="1.2" shape-rendering="auto"/>
<path d="M38.5 57.2 L40.8 59.5 L38.5 61.8 L36.2 59.5 Z" fill="#ffff00" stroke="#0a3a0a" stroke-width="0.9" shape-rendering="auto"/>
<rect x="43" y="58" width="4" height="4" fill="#000"/><rect x="44" y="59" width="2" height="2" fill="#fff"/>
<rect x="38" y="63" width="4" height="4" fill="#000"/><rect x="39" y="64" width="2" height="2" fill="#fff"/>
<rect x="42" y="68" width="10" height="4" fill="#000"/><rect x="45" y="65" width="7" height="3" fill="#000"/><rect x="48" y="62" width="4" height="3" fill="#000"/>
<rect x="43" y="69" width="2" height="2" fill="#ffff00"/><rect x="46" y="69" width="2" height="2" fill="#ffff00"/><rect x="49" y="69" width="2" height="2" fill="#ffff00"/>
<rect x="46" y="66" width="2" height="2" fill="#ffff00"/><rect x="49" y="66" width="2" height="2" fill="#ffff00"/><rect x="49" y="63" width="2" height="2" fill="#ffff00"/>
</svg>
<svg style="left:106px;top:53px" width="22" height="20" viewBox="106 53 22 20">
<path d="M109.5 55.5 V70 M107.5 57.5 L109.5 55.5 L111.5 57.5 M108 69.5 H125.5 M123.5 67.5 L125.5 69.5 L123.5 71.5" stroke="#7a7a7a" stroke-width="1.1" fill="none"/>
<path d="M110 60 H114.5 L120.5 69 H110 Z" fill="#3f6ff5"/>
<path d="M110 60.5 H114.5 L116 62.5 L117 64.5 L118 66.5 L119 68 L121 68.6" stroke="#000080" stroke-width="1.3" fill="none"/>
<g fill="#a00000"><rect x="116" y="60" width="1.2" height="1.2"/><rect x="118" y="60" width="1.2" height="1.2"/><rect x="120" y="60" width="1.2" height="1.2"/><rect x="122" y="60" width="1.2" height="1.2"/></g>
</svg>
<svg style="left:18px;top:77px" width="20" height="19" viewBox="18 77 20 19">
<path d="M27.5 79.5 H33.5 L35.5 81.5 V89.5 H27.5 Z" fill="#f4f8ff" stroke="#6e86c8" stroke-width="1"/>
<path d="M33.5 79.5 V81.5 H35.5" fill="#9fb4e8" stroke="#6e86c8" stroke-width="1"/>
<path d="M29 83.5 H34 M29 85.5 H34 M29 87.5 H34" stroke="#9cc0f0" stroke-width="1"/>
<path d="M20.5 85.5 H23.5 L24.5 86.5 H31.5 V93.5 H21.5 L20.5 92.5 Z" fill="#f5c84a" stroke="#c8860c" stroke-width="1"/>
<path d="M22.5 88.5 H31.5 V93.5 H22.5 Z" fill="#ffec90" stroke="#c8860c" stroke-width="1"/>
</svg>
<svg style="left:74px;top:76px" width="27" height="18" viewBox="74 76 27 18" shape-rendering="crispEdges">
<rect x="76" y="77" width="2" height="11" fill="#5a5a5a"/><rect x="77" y="77" width="1" height="11" fill="#8a8a8a"/>
<rect x="77" y="88" width="1" height="1" fill="#5a5a5a"/><rect x="78" y="89" width="4" height="1" fill="#5a5a5a"/>
<rect x="81" y="77" width="1" height="6" fill="#000"/><rect x="79" y="80" width="1" height="1" fill="#000"/><rect x="83" y="80" width="1" height="1" fill="#000"/><rect x="80" y="81" width="3" height="1" fill="#000"/>
<rect x="81" y="86" width="2" height="1" fill="#222"/><rect x="80" y="87" width="1" height="3" fill="#222"/><rect x="81" y="90" width="2" height="1" fill="#222"/><rect x="81" y="87" width="2" height="3" fill="#fff"/>
<rect x="83" y="83" width="16" height="10" fill="#3a3a3a"/>
<rect x="84" y="84" width="14" height="8" fill="#22a022"/>
<rect x="84" y="84" width="14" height="1" fill="#5cc85c"/><rect x="91" y="84" width="1" height="8" fill="#9ad89a"/>
<rect x="85" y="85" width="2" height="6" fill="#003800"/><rect x="89" y="85" width="1" height="6" fill="#003800"/><rect x="85" y="90" width="5" height="1" fill="#003800"/>
<rect x="87" y="86" width="1" height="1" fill="#a070a0"/>
<rect x="93" y="86" width="1" height="1" fill="#001800"/><rect x="95" y="86" width="1" height="1" fill="#001800"/>
<rect x="93" y="88" width="1" height="1" fill="#001800"/><rect x="95" y="88" width="1" height="1" fill="#001800"/>
<rect x="93" y="90" width="1" height="1" fill="#001800"/><rect x="95" y="90" width="1" height="1" fill="#001800"/>
<rect x="97" y="85" width="1" height="6" fill="#4a6a10"/>
<rect x="87" y="91" width="1" height="1" fill="#c08040"/><rect x="89" y="91" width="1" height="1" fill="#c08040"/>
</svg>
<svg style="left:135px;top:77px" width="24" height="19" viewBox="135 77 24 19">
<path d="M137 84.5 L143.5 79.5 L149 83.8 L155.8 79.5" stroke="#0000ff" stroke-width="1.3" fill="none" stroke-dasharray="1.6 0.4"/>
<g fill="#000"><rect x="136.8" y="86.4" width="1.2" height="1.4"/><rect x="139.8" y="86.8" width="1" height="1"/><rect x="142.8" y="86.8" width="1" height="1"/><rect x="155" y="86.4" width="1.2" height="1.4"/></g>
<circle cx="149.3" cy="88.6" r="3.3" fill="rgba(255,255,255,0.3)" stroke="#333" stroke-width="1.1"/>
<path d="M147 86.5 L149 88.5 L151.5 86.5" stroke="#0000ff" stroke-width="1.3" fill="none"/>
<path d="M151.6 91 L155 94.3" stroke="#000" stroke-width="2" stroke-linecap="round"/>
</svg>
<svg style="left:200px;top:56px" width="37" height="17" viewBox="200 56 37 17">
<rect x="201" y="57" width="35" height="15" fill="#fff"/>
<path d="M201.7 71.5 V57.7 H235 V71.5" stroke="#000" stroke-width="1.3" fill="none"/>
<path d="M202.5 71.5 V69.5 H204 V71.5 M205.5 71.5 V69.5 H211.3 V59.4 H214 V69.5 H216 V59.4 V69.5 H219 V59.4 V69.5 H221.3 L222.5 67.4 H224.2 V65.4 H226.3 V63.3 H228.1 V61.2 H230.1 V59.4 H232.5 V69.5 H234.3 V71.5" stroke="#000" stroke-width="1.25" fill="none"/>
<rect x="207.3" y="67.6" width="2.4" height="3.8" fill="#000"/>
<path d="M208.5 68 V71 M207 69.5 H210" stroke="#ff00ff" stroke-width="1.2"/>
<rect x="218.6" y="64" width="1.6" height="5.6" fill="#ff00ff"/>
</svg>
<svg style="left:320px;top:55px" width="35" height="18" viewBox="320 55 35 18" shape-rendering="crispEdges"><rect x="320" y="55" width="35" height="18" fill="#000"/><rect x="321" y="56" width="33" height="16" fill="#c8c8c8"/><rect x="321" y="56" width="4" height="3" fill="#8a8a8a"/><rect x="325" y="56" width="6" height="3" fill="#ffffff"/><rect x="331" y="56" width="3" height="3" fill="#8a8a8a"/><rect x="334" y="56" width="1" height="3" fill="#ffffff"/><rect x="335" y="56" width="3" height="3" fill="#8a8a8a"/><rect x="338" y="56" width="2" height="3" fill="#ffffff"/><rect x="340" y="56" width="2" height="3" fill="#8a8a8a"/><rect x="342" y="56" width="3" height="3" fill="#000"/><rect x="345" y="56" width="4" height="3" fill="#ffffff"/><rect x="349" y="56" width="5" height="3" fill="#8a8a8a"/><rect x="321" y="59" width="3" height="3" fill="#c4c4c4"/><rect x="324" y="59" width="4" height="3" fill="#8a8a8a"/><rect x="328" y="59" width="4" height="3" fill="#c4c4c4"/><rect x="332" y="59" width="4" height="3" fill="#ffffff"/><rect x="336" y="59" width="3" height="3" fill="#000"/><rect x="339" y="59" width="10" height="3" fill="#c4c4c4"/><rect x="349" y="59" width="4" height="3" fill="#000"/><rect x="353" y="59" width="1" height="3" fill="#c4c4c4"/><rect x="321" y="62" width="6" height="3" fill="#ffffff"/><rect x="327" y="62" width="1" height="1" fill="#c4c4c4"/><rect x="327" y="63" width="1" height="1" fill="#8a8a8a"/><rect x="327" y="64" width="1" height="1" fill="#c4c4c4"/><rect x="328" y="62" width="1" height="1" fill="#8a8a8a"/><rect x="328" y="63" width="1" height="1" fill="#c4c4c4"/><rect x="328" y="64" width="1" height="1" fill="#8a8a8a"/><rect x="329" y="62" width="1" height="1" fill="#c4c4c4"/><rect x="329" y="63" width="1" height="1" fill="#8a8a8a"/><rect x="329" y="64" width="1" height="1" fill="#c4c4c4"/><rect x="330" y="62" width="1" height="1" fill="#8a8a8a"/><rect x="330" y="63" width="1" height="1" fill="#c4c4c4"/><rect x="330" y="64" width="1" height="1" fill="#8a8a8a"/><rect x="331" y="62" width="1" height="1" fill="#c4c4c4"/><rect x="331" y="63" width="1" height="1" fill="#8a8a8a"/><rect x="331" y="64" width="1" height="1" fill="#c4c4c4"/><rect x="332" y="62" width="1" height="1" fill="#8a8a8a"/><rect x="332" y="63" width="1" height="1" fill="#c4c4c4"/><rect x="332" y="64" width="1" height="1" fill="#8a8a8a"/><rect x="333" y="62" width="1" height="1" fill="#c4c4c4"/><rect x="333" y="63" width="1" height="1" fill="#8a8a8a"/><rect x="333" y="64" width="1" height="1" fill="#c4c4c4"/><rect x="334" y="62" width="1" height="1" fill="#8a8a8a"/><rect x="334" y="63" width="1" height="1" fill="#c4c4c4"/><rect x="334" y="64" width="1" height="1" fill="#8a8a8a"/><rect x="335" y="62" width="1" height="1" fill="#c4c4c4"/><rect x="335" y="63" width="1" height="1" fill="#8a8a8a"/><rect x="335" y="64" width="1" height="1" fill="#c4c4c4"/><rect x="336" y="62" width="1" height="1" fill="#8a8a8a"/><rect x="336" y="63" width="1" height="1" fill="#c4c4c4"/><rect x="336" y="64" width="1" height="1" fill="#8a8a8a"/><rect x="337" y="62" width="1" height="1" fill="#c4c4c4"/><rect x="337" y="63" width="1" height="1" fill="#8a8a8a"/><rect x="337" y="64" width="1" height="1" fill="#c4c4c4"/><rect x="338" y="62" width="1" height="1" fill="#8a8a8a"/><rect x="338" y="63" width="1" height="1" fill="#c4c4c4"/><rect x="338" y="64" width="1" height="1" fill="#8a8a8a"/><rect x="339" y="62" width="1" height="1" fill="#c4c4c4"/><rect x="339" y="63" width="1" height="1" fill="#8a8a8a"/><rect x="339" y="64" width="1" height="1" fill="#c4c4c4"/><rect x="340" y="62" width="1" height="1" fill="#8a8a8a"/><rect x="340" y="63" width="1" height="1" fill="#c4c4c4"/><rect x="340" y="64" width="1" height="1" fill="#8a8a8a"/><rect x="341" y="62" width="1" height="1" fill="#c4c4c4"/><rect x="341" y="63" width="1" height="1" fill="#8a8a8a"/><rect x="341" y="64" width="1" height="1" fill="#c4c4c4"/><rect x="342" y="62" width="1" height="1" fill="#8a8a8a"/><rect x="342" y="63" width="1" height="1" fill="#c4c4c4"/><rect x="342" y="64" width="1" height="1" fill="#8a8a8a"/><rect x="343" y="62" width="1" height="1" fill="#c4c4c4"/><rect x="343" y="63" width="1" height="1" fill="#8a8a8a"/><rect x="343" y="64" width="1" height="1" fill="#c4c4c4"/><rect x="344" y="62" width="1" height="1" fill="#8a8a8a"/><rect x="344" y="63" width="1" height="1" fill="#c4c4c4"/><rect x="344" y="64" width="1" height="1" fill="#8a8a8a"/><rect x="345" y="62" width="1" height="1" fill="#c4c4c4"/><rect x="345" y="63" width="1" height="1" fill="#8a8a8a"/><rect x="345" y="64" width="1" height="1" fill="#c4c4c4"/><rect x="346" y="62" width="1" height="1" fill="#8a8a8a"/><rect x="346" y="63" width="1" height="1" fill="#c4c4c4"/><rect x="346" y="64" width="1" height="1" fill="#8a8a8a"/><rect x="347" y="62" width="1" height="1" fill="#c4c4c4"/><rect x="347" y="63" width="1" height="1" fill="#8a8a8a"/><rect x="347" y="64" width="1" height="1" fill="#c4c4c4"/><rect x="348" y="62" width="1" height="1" fill="#8a8a8a"/><rect x="348" y="63" width="1" height="1" fill="#c4c4c4"/><rect x="348" y="64" width="1" height="1" fill="#8a8a8a"/><rect x="349" y="62" width="1" height="1" fill="#c4c4c4"/><rect x="349" y="63" width="1" height="1" fill="#8a8a8a"/><rect x="349" y="64" width="1" height="1" fill="#c4c4c4"/><rect x="350" y="62" width="1" height="1" fill="#8a8a8a"/><rect x="350" y="63" width="1" height="1" fill="#c4c4c4"/><rect x="350" y="64" width="1" height="1" fill="#8a8a8a"/><rect x="351" y="62" width="1" height="1" fill="#c4c4c4"/><rect x="351" y="63" width="1" height="1" fill="#8a8a8a"/><rect x="351" y="64" width="1" height="1" fill="#c4c4c4"/><rect x="352" y="62" width="1" height="1" fill="#8a8a8a"/><rect x="352" y="63" width="1" height="1" fill="#c4c4c4"/><rect x="352" y="64" width="1" height="1" fill="#8a8a8a"/><rect x="353" y="62" width="1" height="1" fill="#c4c4c4"/><rect x="353" y="63" width="1" height="1" fill="#8a8a8a"/><rect x="353" y="64" width="1" height="1" fill="#c4c4c4"/><rect x="321" y="65" width="1" height="4" fill="#c4c4c4"/><rect x="322" y="65" width="1" height="4" fill="#ffffff"/><rect x="323" y="65" width="1" height="4" fill="#c4c4c4"/><rect x="324" y="65" width="1" height="4" fill="#ffffff"/><rect x="325" y="65" width="1" height="4" fill="#c4c4c4"/><rect x="326" y="65" width="1" height="4" fill="#ffffff"/><rect x="327" y="65" width="1" height="4" fill="#c4c4c4"/><rect x="328" y="65" width="1" height="4" fill="#ffffff"/><rect x="329" y="65" width="1" height="4" fill="#c4c4c4"/><rect x="330" y="65" width="1" height="4" fill="#ffffff"/><rect x="331" y="65" width="1" height="4" fill="#c4c4c4"/><rect x="332" y="65" width="1" height="4" fill="#ffffff"/><rect x="333" y="65" width="1" height="4" fill="#c4c4c4"/><rect x="334" y="65" width="1" height="4" fill="#ffffff"/><rect x="335" y="65" width="1" height="4" fill="#c4c4c4"/><rect x="336" y="65" width="1" height="4" fill="#ffffff"/><rect x="337" y="65" width="1" height="4" fill="#c4c4c4"/><rect x="338" y="65" width="1" height="4" fill="#ffffff"/><rect x="339" y="65" width="1" height="4" fill="#c4c4c4"/><rect x="340" y="65" width="1" height="4" fill="#ffffff"/><rect x="341" y="65" width="1" height="4" fill="#c4c4c4"/><rect x="342" y="65" width="1" height="4" fill="#ffffff"/><rect x="343" y="65" width="1" height="4" fill="#c4c4c4"/><rect x="344" y="65" width="1" height="4" fill="#ffffff"/><rect x="345" y="65" width="1" height="4" fill="#c4c4c4"/><rect x="346" y="65" width="1" height="4" fill="#ffffff"/><rect x="347" y="65" width="1" height="4" fill="#c4c4c4"/><rect x="348" y="65" width="1" height="4" fill="#ffffff"/><rect x="349" y="65" width="1" height="4" fill="#c4c4c4"/><rect x="350" y="65" width="1" height="4" fill="#ffffff"/><rect x="351" y="65" width="1" height="4" fill="#c4c4c4"/><rect x="352" y="65" width="1" height="4" fill="#ffffff"/><rect x="353" y="65" width="1" height="4" fill="#c4c4c4"/><rect x="323" y="65" width="1" height="4" fill="#000"/><rect x="331" y="65" width="1" height="4" fill="#000"/><rect x="339" y="65" width="1" height="4" fill="#000"/><rect x="345" y="65" width="1" height="4" fill="#000"/><rect x="349" y="65" width="1" height="4" fill="#000"/><rect x="351" y="65" width="1" height="4" fill="#000"/><rect x="321" y="69" width="33" height="2" fill="#939393"/><rect x="321" y="71" width="33" height="1" fill="#dcdcdc"/></svg>
<svg style="left:442px;top:56px" width="37" height="17" viewBox="442 56 37 17" shape-rendering="crispEdges"><rect x="443" y="57" width="35" height="15" fill="#fff"/><rect x="443" y="57" width="35" height="2" fill="#000"/><rect x="443" y="57" width="1" height="15" fill="#000"/><rect x="477" y="57" width="1" height="15" fill="#000"/><rect x="476" y="58" width="1" height="14" fill="#444"/><rect x="460" y="59" width="1" height="13" fill="#777"/><rect x="470" y="59" width="1" height="13" fill="#777"/><rect x="445" y="59" width="2" height="1" fill="#000"/><rect x="448" y="59" width="1" height="1" fill="#000"/><rect x="450" y="59" width="3" height="1" fill="#000"/><rect x="454" y="59" width="2" height="1" fill="#000"/><rect x="465" y="59" width="1" height="1" fill="#000"/><rect x="467" y="59" width="2" height="1" fill="#000"/><rect x="472" y="59" width="2" height="1" fill="#000"/><rect x="445" y="62" width="2" height="1" fill="#000"/><rect x="448" y="62" width="2" height="1" fill="#000"/><rect x="451" y="62" width="2" height="1" fill="#000"/><rect x="454" y="62" width="1" height="1" fill="#000"/><rect x="467" y="62" width="2" height="1" fill="#000"/><rect x="472" y="62" width="1" height="1" fill="#000"/><rect x="474" y="62" width="1" height="1" fill="#000"/><rect x="445" y="65" width="1" height="1" fill="#000"/><rect x="447" y="65" width="2" height="1" fill="#000"/><rect x="450" y="65" width="1" height="1" fill="#000"/><rect x="452" y="65" width="2" height="1" fill="#000"/><rect x="455" y="65" width="2" height="1" fill="#000"/><rect x="464" y="65" width="1" height="1" fill="#000"/><rect x="466" y="65" width="3" height="1" fill="#000"/><rect x="472" y="65" width="3" height="1" fill="#000"/><rect x="445" y="68" width="1" height="1" fill="#000"/><rect x="447" y="68" width="2" height="1" fill="#000"/><rect x="450" y="68" width="4" height="1" fill="#000"/><rect x="455" y="68" width="2" height="1" fill="#000"/><rect x="458" y="68" width="1" height="1" fill="#000"/><rect x="466" y="68" width="3" height="1" fill="#000"/><rect x="472" y="68" width="1" height="1" fill="#000"/><rect x="445" y="71" width="2" height="1" fill="#000"/><rect x="448" y="71" width="2" height="1" fill="#000"/><rect x="451" y="71" width="2" height="1" fill="#000"/><rect x="454" y="71" width="1" height="1" fill="#000"/><rect x="464" y="71" width="1" height="1" fill="#000"/><rect x="466" y="71" width="1" height="1" fill="#000"/><rect x="468" y="71" width="1" height="1" fill="#000"/><rect x="472" y="71" width="2" height="1" fill="#000"/></svg>
</body></html>
